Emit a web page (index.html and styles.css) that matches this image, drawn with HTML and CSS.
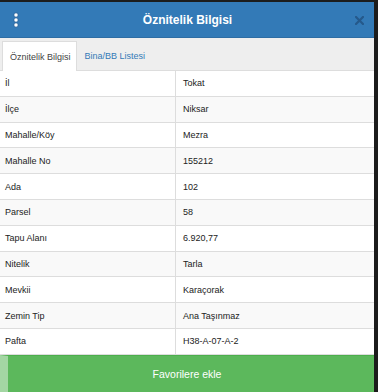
FILE: index.html
```html
<!DOCTYPE html>
<html lang="tr">
<head>
  <meta charset="UTF-8" />
  <meta name="viewport" content="width=device-width, initial-scale=1.0" />
  <title>Öznitelik Bilgisi</title>
  <link rel="stylesheet" href="styles.css">
</head>
<body>
  <div class="panel">
    <div class="header">
      <span class="menu">
        <svg width="8" height="16" viewBox="0 0 8 16">
          <circle cx="4" cy="3" r="2.2" fill="#fff" stroke="#1f5a94" stroke-width="0.8"/>
          <circle cx="4" cy="8" r="2.2" fill="#fff" stroke="#1f5a94" stroke-width="0.8"/>
          <circle cx="4" cy="13" r="2.2" fill="#fff" stroke="#1f5a94" stroke-width="0.8"/>
        </svg>
      </span>
      <h2 class="title">Öznitelik Bilgisi</h2>
      <span class="close">
        <svg width="9" height="9" viewBox="0 0 9 9">
          <path d="M1 1 L8 8 M8 1 L1 8" stroke="#25598b" stroke-width="2.2" stroke-linecap="square"/>
        </svg>
      </span>
    </div>

    <!-- Sekmeler -->
    <div class="tabs">
      <span class="tab active">Öznitelik Bilgisi</span>
      <span class="tab">Bina/BB Listesi</span>
    </div>

    <table class="attrs">
      <tr><td>İl</td><td>Tokat</td></tr>
      <tr><td>İlçe</td><td>Niksar</td></tr>
      <tr><td>Mahalle/Köy</td><td>Mezra</td></tr>
      <tr><td>Mahalle No</td><td>155212</td></tr>
      <tr><td>Ada</td><td>102</td></tr>
      <tr><td>Parsel</td><td>58</td></tr>
      <tr><td>Tapu Alanı</td><td>6.920,77</td></tr>
      <tr><td>Nitelik</td><td>Tarla</td></tr>
      <tr><td>Mevkii</td><td>Karaçorak</td></tr>
      <tr><td>Zemin Tip</td><td>Ana Taşınmaz</td></tr>
      <tr><td>Pafta</td><td>H38-A-07-A-2</td></tr>
    </table>

    <button type="button" class="fav">Favorilere ekle</button>
  </div>
</body>
</html>
```

FILE: styles.css
```css
body {
    margin: 0;
    background: #1c1c1c;
    font-family: "Liberation Sans", Arial, sans-serif;
}
.panel {
    width: 374px;
    margin-top: 2px;
    background: #fff;
    height: 390px;
    overflow: hidden;
    display: flex;
    flex-direction: column;
}
.header {
    height: 35px;
    background: #337ab7;
    border-bottom: 1px solid #2e6da4;
    display: flex;
    align-items: center;
    padding: 0 10px 0 12px;
}
.menu {
    width: 8px;
    height: 16px;
    display: flex;
}
.title {
    flex: 1;
    margin: 0;
    text-align: center;
    color: #fff;
    font-size: 12px;
    font-weight: bold;
}
.close {
    display: flex;
    margin-top: 2px;
}
.tabs {
    height: 29px;
    background: #eee;
    border-bottom: 1px solid #ddd;
    padding: 3px 2px 0;
    display: flex;
    align-items: stretch;
}
.tab {
    display: flex;
    align-items: center;
    padding: 0 6px 0 7px;
    font-size: 9px;
    color: #337ab7;
    border: 1px solid transparent;
    border-bottom: none;
}
.tab.active {
    background: #fff;
    color: #444;
    border-color: #ddd;
    margin-bottom: -1px;
    padding-right: 5px;
}
.attrs {
    width: 100%;
    border-collapse: collapse;
    font-size: 9px;
    color: #222;
}
.attrs td {
    height: 24.8px;
    padding: 0 5px;
    border-bottom: 1px solid #ddd;
    vertical-align: middle;
}
.attrs td:first-child {
    width: 165px;
    border-right: 1px solid #ddd;
}
.attrs td:last-child {
    padding-left: 7px;
}
.attrs tr:nth-child(even) td {
    background: #f9f9f9;
}
.fav {
    flex: 1;
    margin: 0;
    width: 100%;
    background: #5cb85c;
    color: #fff;
    border: none;
    border-top: 1px solid #4cae4c;
    border-left: 8px solid #a3d6a3;
    font-family: "Liberation Sans", Arial, sans-serif;
    font-size: 10.5px;
    padding: 0 8px 0 0;
    cursor: pointer;
}
```
